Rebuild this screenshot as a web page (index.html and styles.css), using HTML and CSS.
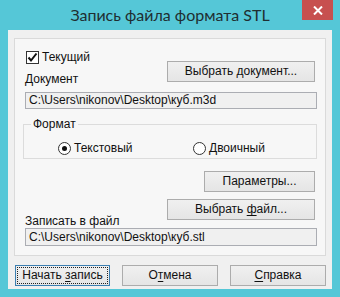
FILE: index.html
```html
<!DOCTYPE html>
<html lang="ru">
<head>
  <meta charset="UTF-8">
  <title>Запись файла формата STL</title>
  <link rel="stylesheet" href="styles.css">
</head>
<body>
  <div class="window">
    <div class="titlebar">
      <span class="title">Запись файла формата STL</span>
      <span class="close">
        <svg width="10" height="9" viewBox="0 0 10 9"><path d="M1 0.5 L9 8.5 M9 0.5 L1 8.5" stroke="#fff" stroke-width="2"/></svg>
      </span>
    </div>

    <div class="client">
      <div class="panel">
        <div class="doc-head">
          <div class="doc-left">
            <label class="check">
              <span class="box">
                <svg width="11" height="11" viewBox="0 0 11 11"><path d="M1.5 5.5 L4 8.5 L9.5 1.5" fill="none" stroke="#111" stroke-width="2"/></svg>
              </span>
              Текущий
            </label>
            <div class="caption caption-doc">Документ</div>
          </div>
          <div class="btn btn-wide">Выбрать документ...</div>
        </div>

        <div class="field">C:\Users\nikonov\Desktop\куб.m3d</div>

        <fieldset class="group">
          <legend>Формат</legend>
          <div class="radios">
            <label class="radio radio-first"><span class="dot on"></span>Текстовый</label>
            <label class="radio"><span class="dot"></span>Двоичный</label>
          </div>
        </fieldset>

        <div class="params-row">
          <div class="btn btn-params">Параметры...</div>
        </div>

        <div class="file-head">
          <div class="caption caption-file">Записать в файл</div>
          <div class="btn btn-wide">Выбрать <u>ф</u>айл...</div>
        </div>

        <div class="field">C:\Users\nikonov\Desktop\куб.stl</div>
      </div>

      <div class="actions">
        <div class="btn btn-action btn-default">Начать <u>з</u>апись</div>
        <div class="btn btn-action">О<u>т</u>мена</div>
        <div class="btn btn-action"><u>С</u>правка</div>
      </div>
    </div>
  </div>
</body>
</html>
```

FILE: styles.css
```css
body {
  margin: 0;
  font-family: "Liberation Sans", Arial, sans-serif;
  font-size: 12px;
  color: #111;
}
.window {
  width: 340px;
  height: 297px;
  box-sizing: border-box;
  background: #55c7d7;
  padding: 0 8px 8px;
  display: flex;
  flex-direction: column;
}
.titlebar {
  position: relative;
  height: 30px;
  line-height: 30px;
  text-align: center;
}
.title {
  font-family: Lato, "Noto Sans", sans-serif;
  font-size: 16px;
  color: #1f2e31;
}
.close {
  position: absolute;
  top: 0;
  right: -1px;
  width: 31px;
  height: 20px;
  background: #c7504f;
  display: flex;
  align-items: center;
  justify-content: center;
}
.client {
  flex: 1;
  background: #f0f0f0;
  padding: 8px 6px 0;
}
.panel {
  border: 1px solid #dadada;
  background: #f7f7f7;
  padding: 12px 8px 9px 10px;
}
.doc-head, .file-head {
  display: flex;
  justify-content: space-between;
  align-items: flex-start;
}
.check {
  display: flex;
  align-items: center;
  gap: 3px;
  height: 13px;
  line-height: 13px;
  margin-left: 1px;
}
.box {
  width: 11px;
  height: 11px;
  border: 1px solid #333;
  background: #fff;
  display: flex;
}
.caption {
  line-height: 14px;
}
.caption-doc {
  margin-top: 8px;
}
.caption-file {
  padding-top: 15px;
}
.btn {
  box-sizing: border-box;
  height: 21px;
  line-height: 19px;
  border: 1px solid #acacac;
  background: linear-gradient(#f0f0f0, #e5e5e5);
  text-align: center;
  color: #111;
}
.btn u {
  text-decoration-thickness: 1px;
  text-underline-offset: 2px;
}
.btn-wide {
  width: 148px;
  margin-right: 2px;
}
.doc-head .btn-wide {
  margin-top: 10px;
}
.field {
  box-sizing: border-box;
  height: 17px;
  line-height: 15px;
  margin-top: 6px;
  border: 1px solid #abadb3;
  background: #f0f0f0;
  padding: 0 3px;
}
.file-head + .field {
  margin-top: 0;
  height: 18px;
  line-height: 16px;
}
.group {
  margin: 8px 0 0 -2px;
  padding: 10px 0 3px 7px;
  border: 1px solid #dcdcdc;
}
.group legend {
  padding: 0 2px;
  line-height: 14px;
}
.radios {
  display: flex;
  padding-left: 27px;
}
.radio {
  display: flex;
  align-items: center;
  gap: 3px;
  height: 14px;
}
.radio-first {
  width: 135px;
}
.dot {
  width: 11px;
  height: 11px;
  border: 1px solid #333;
  border-radius: 50%;
  background: #fff;
  display: flex;
  align-items: center;
  justify-content: center;
}
.dot.on::after {
  content: "";
  width: 5px;
  height: 5px;
  border-radius: 50%;
  background: #111;
}
.params-row {
  display: flex;
  justify-content: flex-end;
  margin-top: 12px;
}
.btn-params {
  width: 111px;
  margin-right: 2px;
}
.file-head {
  margin-top: 7px;
}
.actions {
  display: flex;
  justify-content: flex-end;
  gap: 12px;
  margin-top: 9px;
}
.btn-action {
  width: 96px;
}
.btn-default {
  position: relative;
  width: 95px;
  border-color: #3c7fb1;
}
.btn-default::after {
  content: "";
  position: absolute;
  inset: 1px;
  border: 1px dotted #222;
}
```
